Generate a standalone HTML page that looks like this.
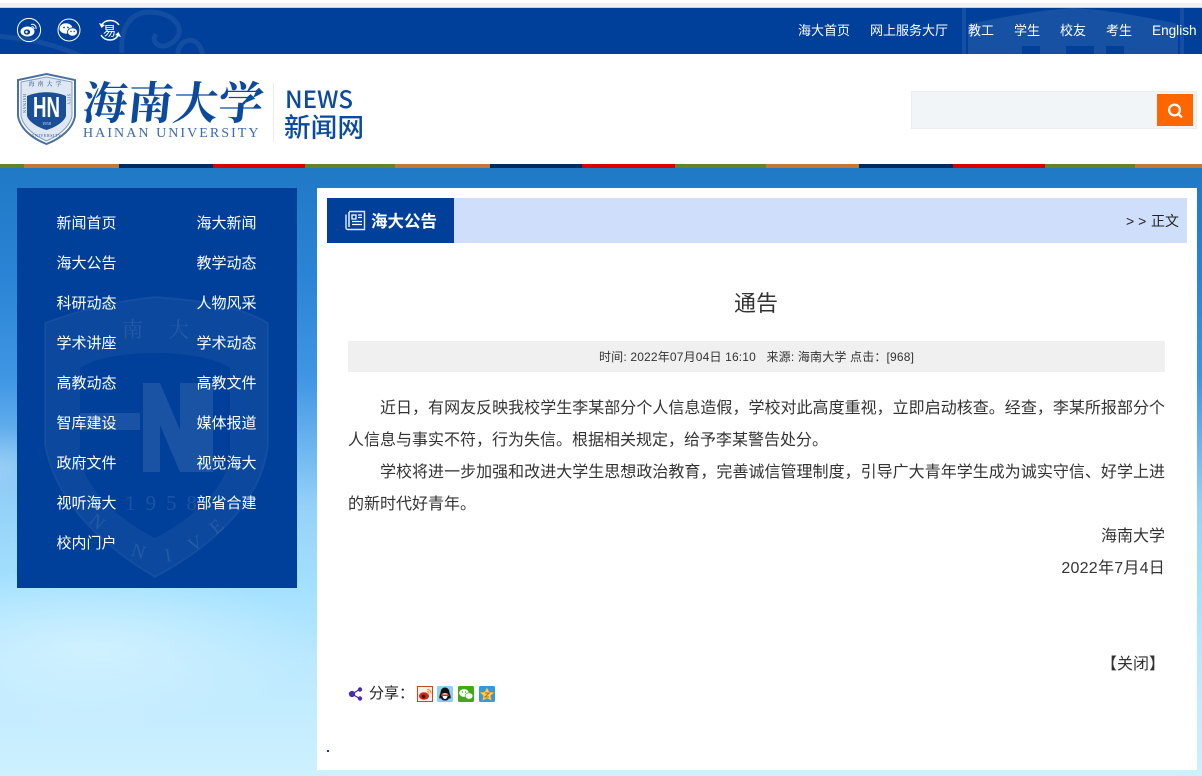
<!DOCTYPE html>
<html lang="zh"><head><meta charset="utf-8"><title>通告</title>
<style>
*{margin:0;padding:0;box-sizing:border-box}
html,body{width:1202px;height:776px;overflow:hidden;background:#fff}
body{position:relative;font-family:"Liberation Sans","Noto Sans CJK SC",sans-serif;color:#333}
.a{position:absolute;white-space:nowrap}
#top{left:0;top:8px;width:1202px;height:46px;background:#00409a;overflow:hidden}
.nav{top:22px;font-size:13px;line-height:18px;color:#fff}
.st{position:absolute;top:164px;height:4px}
#bg{left:0;top:168px;width:1202px;height:608px;background:
radial-gradient(ellipse 60px 40px at 0px 300px,rgba(170,215,248,.6),transparent),
radial-gradient(ellipse 230px 80px at 90px 480px,rgba(218,245,255,.7),transparent),
linear-gradient(180deg,#1f79c5 0,#2b84d5 110px,#3f96e3 210px,#67b1ee 270px,#95d2f8 340px,#a4e1ff 420px,#bce9ff 500px,#cdf1ff 608px)}
#side{left:17px;top:188px;width:280px;height:400px;background:#00409a}
.m{position:absolute;color:#fff;font-size:15px;line-height:20px;white-space:nowrap}
#main{left:317px;top:188px;width:880px;height:582px;background:#fff}
p.t{position:absolute;left:348px;width:817px;font-size:16px;line-height:32px;color:#333;text-align:justify;text-align-last:justify;white-space:nowrap}
</style></head><body>
<div class="a" style="left:0;top:0;width:1202px;height:3px;background:#fff"></div>
<div class="a" style="left:0;top:3px;width:1202px;height:4px;background:#f1f1f1"></div>
<div class="a" style="left:0;top:7px;width:1202px;height:1px;background:#cfcfcf"></div>

<div class="a" id="top">
<svg width="1202" height="46" style="position:absolute;left:0;top:0" fill="none" stroke="#fff" stroke-opacity=".07" stroke-width="5">
<path d="M-5 28C30 30 60 38 85 50"/>
<path d="M122 45C120 20 130 4 150 4C175 4 190 24 170 36C160 42 150 34 156 26"/>
<path d="M178 46C178 34 190 28 198 36C203 42 202 46 202 50"/>
<g stroke-opacity=".08"><path d="M964 -2V46M1182 -2V46" stroke-width="4"/><path d="M968 16C1010 8 1040 2 1073 0C1110 2 1140 8 1178 16V50H968Z" fill="#fff" fill-opacity=".09" stroke="none"/><path d="M1022 46V38H1040V46M1066 46V38H1094V46M1106 46V38H1124V46" fill="#00409a" stroke="none"/></g>
</svg>
</div>
<svg class="a" style="left:16px;top:17px" width="110" height="28" viewBox="0 0 110 28" fill="none">
<circle cx="13" cy="13" r="11.600" stroke="#fff" stroke-width="1"/>
<ellipse cx="11.500" cy="14.500" rx="7" ry="5" fill="#fff"/><ellipse cx="11" cy="15" rx="3.200" ry="2.600" fill="#00409a"/><circle cx="10.500" cy="15" r="1.200" fill="#fff"/>
<path d="M15 7.500C18 6.500 20.500 9 20 12M15.500 9.800C17 9.400 18.200 10.500 18 12" stroke="#fff" stroke-width="1"/>
<circle cx="53" cy="13" r="11" stroke="#fff" stroke-width="1"/>
<ellipse cx="50" cy="11.500" rx="6.500" ry="5.200" fill="#fff"/><ellipse cx="56.500" cy="15" rx="5" ry="4.200" fill="#fff" stroke="#00409a" stroke-width=".8"/>
<circle cx="48" cy="10.500" r=".9" fill="#00409a"/><circle cx="52" cy="10.500" r=".9" fill="#00409a"/><circle cx="55" cy="14.500" r=".7" fill="#00409a"/><circle cx="58.200" cy="14.500" r=".7" fill="#00409a"/>
<path d="M85 9C87 5 90 3.500 94 3.500C98 3.500 101 5 103 8M103 17C101 21 98 23 94 23C90 23 87 21.500 85 18" stroke="#fff" stroke-width="1.400"/>
<path d="M83 6L85.500 11L89 8Z M105 20L102.500 15L99 18Z" fill="#fff"/>
<text x="87" y="18.500" font-size="13" fill="#fff" font-family="'Liberation Sans','Noto Sans CJK SC',sans-serif">易</text>
</svg>
<div class="a nav" style="left:798px">海大首页</div>
<div class="a nav" style="left:870px">网上服务大厅</div>
<div class="a nav" style="left:968px">教工</div>
<div class="a nav" style="left:1014px">学生</div>
<div class="a nav" style="left:1060px">校友</div>
<div class="a nav" style="left:1106px">考生</div>
<div class="a nav" style="left:1152px;font-size:13.600px">English</div>

<!-- logo -->
<svg class="a" style="left:16px;top:72px" width="62" height="74" viewBox="0 0 62 74">
<path d="M2 8L30.500 2L59 8V44C57 56 46 66 30.500 72C15 66 4 56 2 44Z" fill="#fff" stroke="#49709f" stroke-width="2"/>
<path d="M5 10L30.500 5L56 10V44C54 54 44 63 30.500 69C17 63 7 54 5 44Z" fill="#dfe7f3" stroke="#7f9cc3" stroke-width="1"/>
<path d="M11 24C22 19 39 19 50 24V44C48 50 40 55 30.500 58C21 55 13 50 11 44Z" fill="#1b4f95"/>
<text x="30.500" y="45" text-anchor="middle" font-size="29" font-weight="bold" fill="#fff" font-family="'Liberation Sans',sans-serif" textLength="27" lengthAdjust="spacingAndGlyphs">HN</text>
<text x="30.500" y="53" text-anchor="middle" font-size="4.500" fill="#dde" font-family="'Liberation Serif',serif">1958</text>
<text x="30.500" y="14" text-anchor="middle" font-size="6" fill="#24508f" letter-spacing="3" font-family="'Liberation Serif','Noto Serif CJK SC',serif">海南大学</text>
<text x="30.500" y="65" text-anchor="middle" font-size="4" fill="#24508f" letter-spacing=".6" font-family="'Liberation Serif',serif">UNIVERSITY</text>
<text x="8.500" y="22" font-size="4" fill="#24508f" writing-mode="tb" letter-spacing=".6" font-family="'Liberation Serif',serif">HAINAN</text>
<text x="53" y="22" font-size="4" fill="#24508f" writing-mode="tb" letter-spacing=".6" font-family="'Liberation Serif',serif">SITY</text>
</svg>
<div class="a" style="left:83px;top:70px;font:bold 45px/60px 'Noto Serif CJK SC',serif;color:#0b4a9e;letter-spacing:.3px;transform-origin:0 50%;transform:skewX(-6deg)">海南大学</div>
<div class="a" style="left:83px;top:126px;font:14px/15px 'Liberation Serif',serif;color:#3c69ad;letter-spacing:2.050px">HAINAN UNIVERSITY</div>
<div class="a" style="left:273px;top:83px;width:1px;height:59px;background:#ececec"></div>
<div class="a" style="left:285px;top:83px;font:500 24px/30px 'Noto Sans CJK SC',sans-serif;color:#0b4a9e">NEWS</div>
<div class="a" style="left:284px;top:108px;font:500 26.700px/36px 'Noto Sans CJK SC',sans-serif;color:#0b4a9e">新闻网</div>

<!-- search -->
<div class="a" style="left:911px;top:91px;width:286px;height:38px;background:#f2f5f8;border:1px solid #ececec"></div>
<div class="a" style="left:1157px;top:94px;width:36px;height:32px;background:#ff6600"></div>
<svg class="a" style="left:1165px;top:102px" width="20" height="18" fill="none" stroke="#fff" stroke-width="2.200"><circle cx="9.500" cy="8" r="5.400"/><path d="M13.500 12L17 15.500"/></svg>

<!-- stripes -->
<div class="st" style="left:0;width:24px;background:#668226"></div>
<div class="st" style="left:24px;width:95px;background:#c3783a"></div>
<div class="st" style="left:119px;width:94px;background:#012a5d"></div>
<div class="st" style="left:213px;width:92px;background:#d90000"></div>
<div class="st" style="left:305px;width:90px;background:#668226"></div>
<div class="st" style="left:395px;width:95px;background:#c3783a"></div>
<div class="st" style="left:490px;width:92px;background:#012a5d"></div>
<div class="st" style="left:582px;width:93px;background:#d90000"></div>
<div class="st" style="left:675px;width:91px;background:#668226"></div>
<div class="st" style="left:766px;width:93px;background:#c3783a"></div>
<div class="st" style="left:859px;width:94px;background:#012a5d"></div>
<div class="st" style="left:953px;width:92px;background:#d90000"></div>
<div class="st" style="left:1045px;width:90px;background:#668226"></div>
<div class="st" style="left:1135px;width:67px;background:#c3783a"></div>

<div class="a" id="bg"></div>

<!-- side -->
<div class="a" id="side">
<svg width="280" height="400" style="position:absolute;left:0;top:0" viewBox="17 188 280 400">
<path d="M45 323C90 306 125 300 155 297C200 300 240 306 268 323V445C262 500 215 545 155 577C100 545 55 500 45 445Z" fill="#fff" fill-opacity=".045" stroke="#fff" stroke-opacity=".05" stroke-width="2"/>
<path d="M80 368C110 348 200 348 230 368V455C226 490 190 520 155 538C120 520 84 490 80 455Z" fill="#00409a"/>
<path d="M80 413H140V430H80ZM143 383H160L180 430V383H197V472H180L160 425V472H143ZM197 383H213V472H197Z" fill="#fff" fill-opacity=".1"/>
<g fill="#fff" fill-opacity=".1" font-family="'Liberation Serif','Noto Serif CJK SC',serif">
<text x="122" y="337" font-size="21">南</text><text x="168" y="337" font-size="21">大</text>
<text x="125" y="510" font-size="21" letter-spacing="10">1958</text>
<text x="88" y="522" font-size="19" transform="rotate(40 88 522)">N</text>
<text x="130" y="555" font-size="19" transform="rotate(18 130 555)">N</text>
<text x="166" y="562" font-size="19" transform="rotate(-10 166 562)">I</text>
<text x="192" y="552" font-size="19" transform="rotate(-28 192 552)">V</text>
<text x="216" y="535" font-size="19" transform="rotate(-40 216 535)">E</text>
</g></svg>
</div>
<div class="m" style="left:56.500px;top:214px">新闻首页</div><div class="m" style="left:196.500px;top:214px">海大新闻</div>
<div class="m" style="left:56.500px;top:254px">海大公告</div><div class="m" style="left:196.500px;top:254px">教学动态</div>
<div class="m" style="left:56.500px;top:294px">科研动态</div><div class="m" style="left:196.500px;top:294px">人物风采</div>
<div class="m" style="left:56.500px;top:334px">学术讲座</div><div class="m" style="left:196.500px;top:334px">学术动态</div>
<div class="m" style="left:56.500px;top:374px">高教动态</div><div class="m" style="left:196.500px;top:374px">高教文件</div>
<div class="m" style="left:56.500px;top:414px">智库建设</div><div class="m" style="left:196.500px;top:414px">媒体报道</div>
<div class="m" style="left:56.500px;top:454px">政府文件</div><div class="m" style="left:196.500px;top:454px">视觉海大</div>
<div class="m" style="left:56.500px;top:494px">视听海大</div><div class="m" style="left:196.500px;top:494px">部省合建</div>
<div class="m" style="left:56.500px;top:534px">校内门户</div>

<!-- main -->
<div class="a" id="main"></div>
<div class="a" style="left:327px;top:198px;width:860px;height:45px;background:#cfdefa"></div>
<div class="a" style="left:327px;top:198px;width:127px;height:45px;background:#00409a"></div>
<svg class="a" style="left:345px;top:209px" width="21" height="22" fill="none" stroke="#fff"><path d="M4 2.500H19.500V20.500H3C1.500 20.500 1 19.500 1 18.500V5.500" stroke-width="1.400" stroke="#dfe8f5"/><path d="M4 3V18" stroke-width="1.400"/><path d="M7 6H11V10H7ZM13 6H17M13 8.500H17M7 12.500H17M7 15.500H17" stroke-width="1.300"/></svg>
<div class="a" style="left:371px;top:211px;font-size:16.500px;line-height:23px;font-weight:bold;color:#fff">海大公告</div>
<div class="a" style="left:1126px;top:211px;font-size:14px;line-height:20px;color:#222;letter-spacing:4px">&gt;&gt;</div>
<div class="a" style="left:1151px;top:211px;font-size:14px;line-height:20px;color:#222">正文</div>

<div class="a" style="left:734px;top:289px;font-size:22px;line-height:30px;color:#333">通告</div>
<div class="a" style="left:348px;top:341px;width:817px;height:31px;background:#f0f0f0"></div>
<div class="a" style="left:599px;top:349px;font-size:12px;line-height:16px;color:#333;white-space:pre;letter-spacing:.17px">时间: 2022年07月04日 16:10   来源: 海南大学 点击：[968]</div>

<p class="t" style="top:393px;padding-left:32px">近日，有网友反映我校学生李某部分个人信息造假，学校对此高度重视，立即启动核查。经查，李某所报部分个</p>
<p class="t" style="top:425px;text-align-last:left">人信息与事实不符，行为失信。根据相关规定，给予李某警告处分。</p>
<p class="t" style="top:457px;padding-left:32px">学校将进一步加强和改进大学生思想政治教育，完善诚信管理制度，引导广大青年学生成为诚实守信、好学上进</p>
<p class="t" style="top:489px;text-align-last:left">的新时代好青年。</p>
<p class="t" style="top:521px;text-align-last:right">海南大学</p>
<p class="t" style="top:553px;text-align-last:right;letter-spacing:.25px">2022年7月4日</p>
<p class="t" style="top:649px;text-align-last:right">【关闭】</p>

<svg class="a" style="left:348px;top:686px" width="16" height="16" fill="#4a2ab0" stroke="#4a2ab0"><path d="M4 8L11.500 3.500M4 8L11.500 12.500" stroke-width="1.300"/><circle cx="4" cy="8" r="2.600"/><circle cx="12" cy="3.500" r="1.700"/><circle cx="12" cy="12.500" r="1.700"/></svg>
<div class="a" style="left:369px;top:684px;font-size:15px;line-height:20px;color:#222">分享：</div>
<svg class="a" style="left:417px;top:686px" width="80" height="17" viewBox="0 0 80 17">
<rect x=".5" y=".5" width="15" height="15" fill="#f4efe8" stroke="#d8401a"/><ellipse cx="7" cy="10" rx="5" ry="3.800" fill="#d8231e"/><circle cx="6.500" cy="10.500" r="1.800" fill="#222"/><path d="M10 3.500C12.500 3.500 14 5 14 7.500M10 5.500C11.200 5.500 12 6.300 12 7.500" fill="none" stroke="#f08a14" stroke-width="1.100"/>
<rect x="20" y="0" width="16" height="16" rx="1.500" fill="#8ed0f2"/><path d="M28 1.500C31 1.500 32.500 4 32.500 7C33.500 9 34 11 33.500 12.500C33 13 32.500 12.500 32 12C31.500 14 29.500 14.500 28 14.500C26.500 14.500 24.500 14 24 12C23.500 12.500 23 13 22.500 12.500C22 11 22.500 9 23.500 7C23.500 4 25 1.500 28 1.500Z" fill="#111"/><path d="M25.500 7.500H30.500C31 10 30 13 28 13C26 13 25 10 25.500 7.500Z" fill="#fff"/><path d="M24 8.500H32V10H24Z" fill="#d8231e"/><path d="M26.500 7H29.500L28 8Z" fill="#f5b014"/><path d="M23.500 15H27V16H23ZM29 15H32.500V16H29Z" fill="#f5b014"/>
<rect x="41" y="0" width="16" height="16" rx="1.500" fill="#3faa16"/><ellipse cx="47" cy="7" rx="4.800" ry="3.900" fill="#fff"/><ellipse cx="52" cy="10" rx="3.900" ry="3.200" fill="#fff" stroke="#3faa16" stroke-width=".6"/><circle cx="45.500" cy="6" r=".7" fill="#3faa16"/><circle cx="48.500" cy="6" r=".7" fill="#3faa16"/>
<rect x="62" y="0" width="16" height="16" rx="1.500" fill="#2e9be8"/><path d="M70 1.500L72.200 6L77 6.500L73.500 9.800L74.500 14.500L70 12.200L65.500 14.500L66.500 9.800L63 6.500L67.800 6Z" fill="#f8d050" stroke="#d89a20" stroke-width=".5"/><path d="M68 7H72L68 11H72" fill="none" stroke="#b8701a" stroke-width="1.100"/>
</svg>
<div class="a" style="left:327px;top:750px;width:2px;height:2px;background:#2a2aa0"></div>
</body></html>
